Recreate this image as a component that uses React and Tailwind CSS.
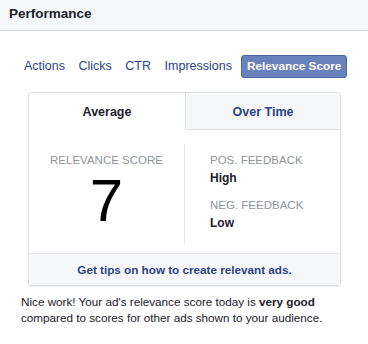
import React from 'react'

function App() {
  return (
    <div className="w-[368px] h-[344px] bg-white overflow-hidden text-[#1d2129]" style={{ fontFamily: '"Liberation Sans", Arial, sans-serif' }}>
      {/* Header */}
      <div className="h-[31px] bg-[#f6f7f9] border-b border-[#d3d6db] pl-[9px] pt-[1px]">
        <span className="text-[13.5px] font-bold">Performance</span>
      </div>

      {/* Metric tabs */}
      <div className="flex items-center mt-[24px] pl-[24px] h-[23px] text-[12.5px] text-[#2d4486]">
        <span>Actions</span>
        <span className="ml-[13.5px]">Clicks</span>
        <span className="ml-[13.5px]">CTR</span>
        <span className="ml-[13.5px]">Impressions</span>
        <span className="ml-[9px] h-[23px] px-[5px] flex items-center rounded-[3px] bg-[#6a82bb] border border-[#4c66a4] text-white text-[11.8px] font-bold">
          Relevance Score
        </span>
      </div>

      {/* Card */}
      <div className="mt-[14px] ml-[28px] w-[313px] border border-[#dddfe2] rounded-[3px] shadow-[0_1px_1px_rgba(0,0,0,0.08)]">
        <div className="flex h-[37px] text-[12.5px] font-bold">
          <div className="w-[156px] flex items-center justify-center bg-white pt-[2px]">Average</div>
          <div className="flex-1 flex items-center justify-center bg-[#f6f7f9] border-l border-b border-[#dddfe2] text-[#2d4486] pt-[2px]">
            Over Time
          </div>
        </div>

        <div className="flex pt-[14px] pb-[9px]">
          <div className="w-[156px] border-r border-[#e5e6e9] h-[100px] flex flex-col items-center">
            <div className="mt-[9px] text-[11.5px] text-[#90949c] leading-[14px]">RELEVANCE SCORE</div>
            <div className="mt-[4px] text-[60px] leading-[60px] text-black">7</div>
          </div>
          <div className="pl-[25px] pt-[9px]">
            <div className="text-[11.5px] text-[#90949c] leading-[14px]">POS. FEEDBACK</div>
            <div className="mt-[4px] text-[12px] font-bold leading-[14px]">High</div>
            <div className="mt-[13px] text-[11.5px] text-[#90949c] leading-[14px]">NEG. FEEDBACK</div>
            <div className="mt-[4px] text-[12px] font-bold leading-[14px]">Low</div>
          </div>
        </div>

        <div className="h-[32px] bg-[#f6f7f9] border-t border-[#e5e6e9] flex items-center justify-center text-[11.7px] font-bold text-[#2d4486]">
          Get tips on how to create relevant ads.
        </div>
      </div>

      {/* Summary */}
      <p className="mt-[8px] pl-[21px] text-[11.7px] leading-[16px]">
        Nice work! Your ad's relevance score today is <b>very good</b> compared to scores for other ads shown to your audience.
      </p>
    </div>
  )
}

export default App
